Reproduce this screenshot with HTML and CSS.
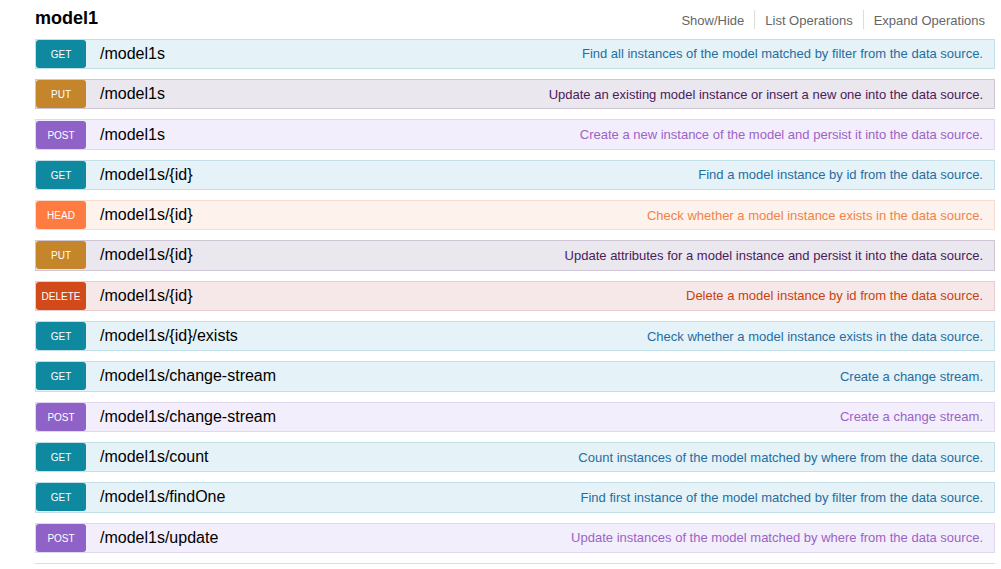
FILE: index.html
```
<!DOCTYPE html>
<html>
<head>
<meta charset="utf-8">
<link rel="stylesheet" href="styles.css">
</head>
<body>
<div class="wrap">
  <div class="resource">
    <div class="res-head">
      <h2 class="res-title">model1</h2>
      <ul class="options">
        <li>Show/Hide</li>
        <li>List Operations</li>
        <li>Expand Operations</li>
      </ul>
    </div>
    <ul class="ops">
      <li class="op get"><span class="method">get</span><span class="path">/model1s</span><span class="desc">Find all instances of the model matched by filter from the data source.</span></li>
      <li class="op put"><span class="method">put</span><span class="path">/model1s</span><span class="desc">Update an existing model instance or insert a new one into the data source.</span></li>
      <li class="op post"><span class="method">post</span><span class="path">/model1s</span><span class="desc">Create a new instance of the model and persist it into the data source.</span></li>
      <li class="op get"><span class="method">get</span><span class="path">/model1s/{id}</span><span class="desc">Find a model instance by id from the data source.</span></li>
      <li class="op head"><span class="method">head</span><span class="path">/model1s/{id}</span><span class="desc">Check whether a model instance exists in the data source.</span></li>
      <li class="op put"><span class="method">put</span><span class="path">/model1s/{id}</span><span class="desc">Update attributes for a model instance and persist it into the data source.</span></li>
      <li class="op delete"><span class="method">delete</span><span class="path">/model1s/{id}</span><span class="desc">Delete a model instance by id from the data source.</span></li>
      <li class="op get"><span class="method">get</span><span class="path">/model1s/{id}/exists</span><span class="desc">Check whether a model instance exists in the data source.</span></li>
      <li class="op get"><span class="method">get</span><span class="path">/model1s/change-stream</span><span class="desc">Create a change stream.</span></li>
      <li class="op post"><span class="method">post</span><span class="path">/model1s/change-stream</span><span class="desc">Create a change stream.</span></li>
      <li class="op get"><span class="method">get</span><span class="path">/model1s/count</span><span class="desc">Count instances of the model matched by where from the data source.</span></li>
      <li class="op get"><span class="method">get</span><span class="path">/model1s/findOne</span><span class="desc">Find first instance of the model matched by filter from the data source.</span></li>
      <li class="op post"><span class="method">post</span><span class="path">/model1s/update</span><span class="desc">Update instances of the model matched by where from the data source.</span></li>
    </ul>
  </div>
</div>
</body>
</html>
```
FILE: styles.css
```
html, body {
  margin: 0;
  padding: 0;
  background: #ffffff;
  font-family: "Liberation Sans", Arial, sans-serif;
}

.wrap {
  width: 960px;
  margin-left: 35px;
}

.resource {
  border-bottom: 1px solid #dddddd;
  padding-bottom: 9.7px;
}

.res-head {
  display: flex;
  justify-content: space-between;
  align-items: flex-start;
  height: 38.7px;
}

.res-title {
  margin: 0;
  padding-top: 8.5px;
  font-size: 18px;
  line-height: 18px;
  font-weight: bold;
  color: #000000;
}

.options {
  display: flex;
  list-style: none;
  margin: 10px 0 0;
  padding: 0;
}

.options li {
  padding: 2px 10px 0;
  line-height: 17px;
  font-size: 13px;
  color: #666666;
  border-right: 1px solid #dddddd;
}

.options li:last-child {
  border-right: none;
}

.ops {
  list-style: none;
  margin: 0;
  padding: 0;
}

.op {
  display: flex;
  align-items: center;
  box-sizing: border-box;
  height: 30.33px;
  margin-bottom: 10px;
  border: 1px solid;
}

.op:last-child {
  margin-bottom: 0;
}

.method {
  display: block;
  box-sizing: border-box;
  width: 50px;
  height: 28px;
  padding-top: 9px;
  border-radius: 3px;
  text-align: center;
  text-transform: uppercase;
  color: #ffffff;
  font-size: 10px;
  line-height: 12px;
}

.path {
  padding-left: 14px;
  font-size: 16px;
  color: #000000;
  white-space: nowrap;
}

.desc {
  flex: 1;
  text-align: right;
  padding-right: 11px;
  font-size: 13px;
  white-space: nowrap;
}

.get { background: #e5f2f7; border-color: #c3e0e9; }
.get .method { background: #0f89a0; }
.get .desc { color: #1f6ea3; }

.put { background: #ebe7ef; border-color: #cec5d5; }
.put .method { background: #c5862b; }
.put .desc { color: #4a1b5b; }

.post { background: #f3eefb; border-color: #e2d7f0; }
.post .method { background: #8f62c8; }
.post .desc { color: #9a64c6; }

.head { background: #fdf2ec; border-color: #f6ddd0; }
.head .method { background: #fe7c41; }
.head .desc { color: #f0834a; }

.delete { background: #f6e8e8; border-color: #e8cdcd; }
.delete .method { background: #d2491a; }
.delete .desc { color: #c8420f; }
```
